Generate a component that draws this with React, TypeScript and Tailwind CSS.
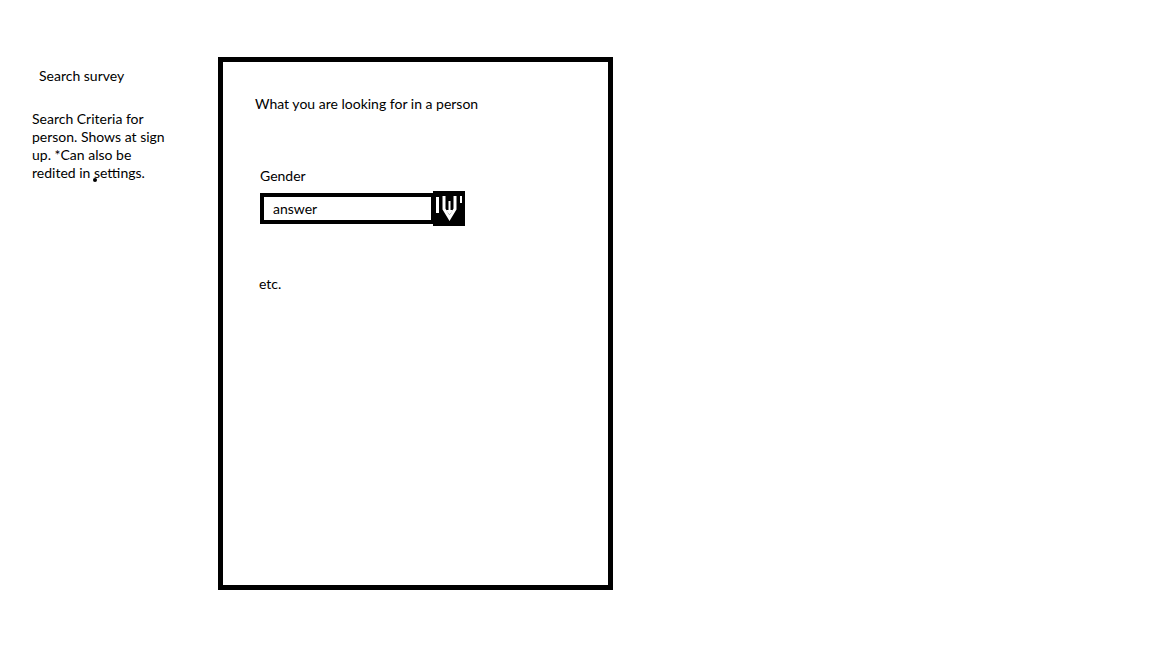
import React from 'react';

const ArrowBox: React.FC = () => (
  <svg width="32" height="35" viewBox="0 0 32 35" className="block shrink-0 -ml-[2px]">
    <rect x="0" y="0" width="32" height="35" fill="#000" />
    <rect x="3" y="6" width="3" height="16" fill="#fff" />
    <rect x="27" y="5" width="2" height="7" fill="#fff" />
    <polyline
      points="11,5 11,18 16.5,27 22,18 22,5"
      fill="none"
      stroke="#fff"
      strokeWidth="3"
      strokeLinejoin="miter"
    />
    <rect x="15.5" y="10" width="2" height="9" fill="#fff" />
    <polygon points="13,19 20,19 16.5,24" fill="#fff" />
  </svg>
);

export default function App() {
  return (
    <div
      className="min-h-screen w-full bg-white text-black flex items-start pl-8 pt-[57px] text-[14px] leading-[18px]"
      style={{ fontFamily: 'Lato, "Open Sans", sans-serif' }}
    >
      {/* Notes column */}
      <div className="w-[186px] pt-[10px] shrink-0">
        <div className="pl-[7px]">Search survey</div>
        <p className="relative mt-[25px]">
          Search Criteria for
          <br />
          person. Shows at sign
          <br />
          up. *Can also be
          <br />
          redited in settings.
          <span className="absolute left-[61px] top-[68px] w-[4px] h-[4px] rounded-full bg-black" />
        </p>
      </div>

      {/* Mock screen */}
      <div className="w-[395px] h-[533px] border-[5px] border-black pl-8 pt-[33px] shrink-0">
        <div>What you are looking for in a person</div>

        <div className="ml-[5px] mt-[54px]">Gender</div>

        <div className="ml-[5px] mt-[6px] flex items-center h-[35px]">
          <div className="w-[175px] h-[31px] border-4 border-black flex items-center pl-[9px]">
            answer
          </div>
          <ArrowBox />
        </div>

        <div className="ml-[4px] mt-[49px]">etc.</div>
      </div>
    </div>
  );
}
